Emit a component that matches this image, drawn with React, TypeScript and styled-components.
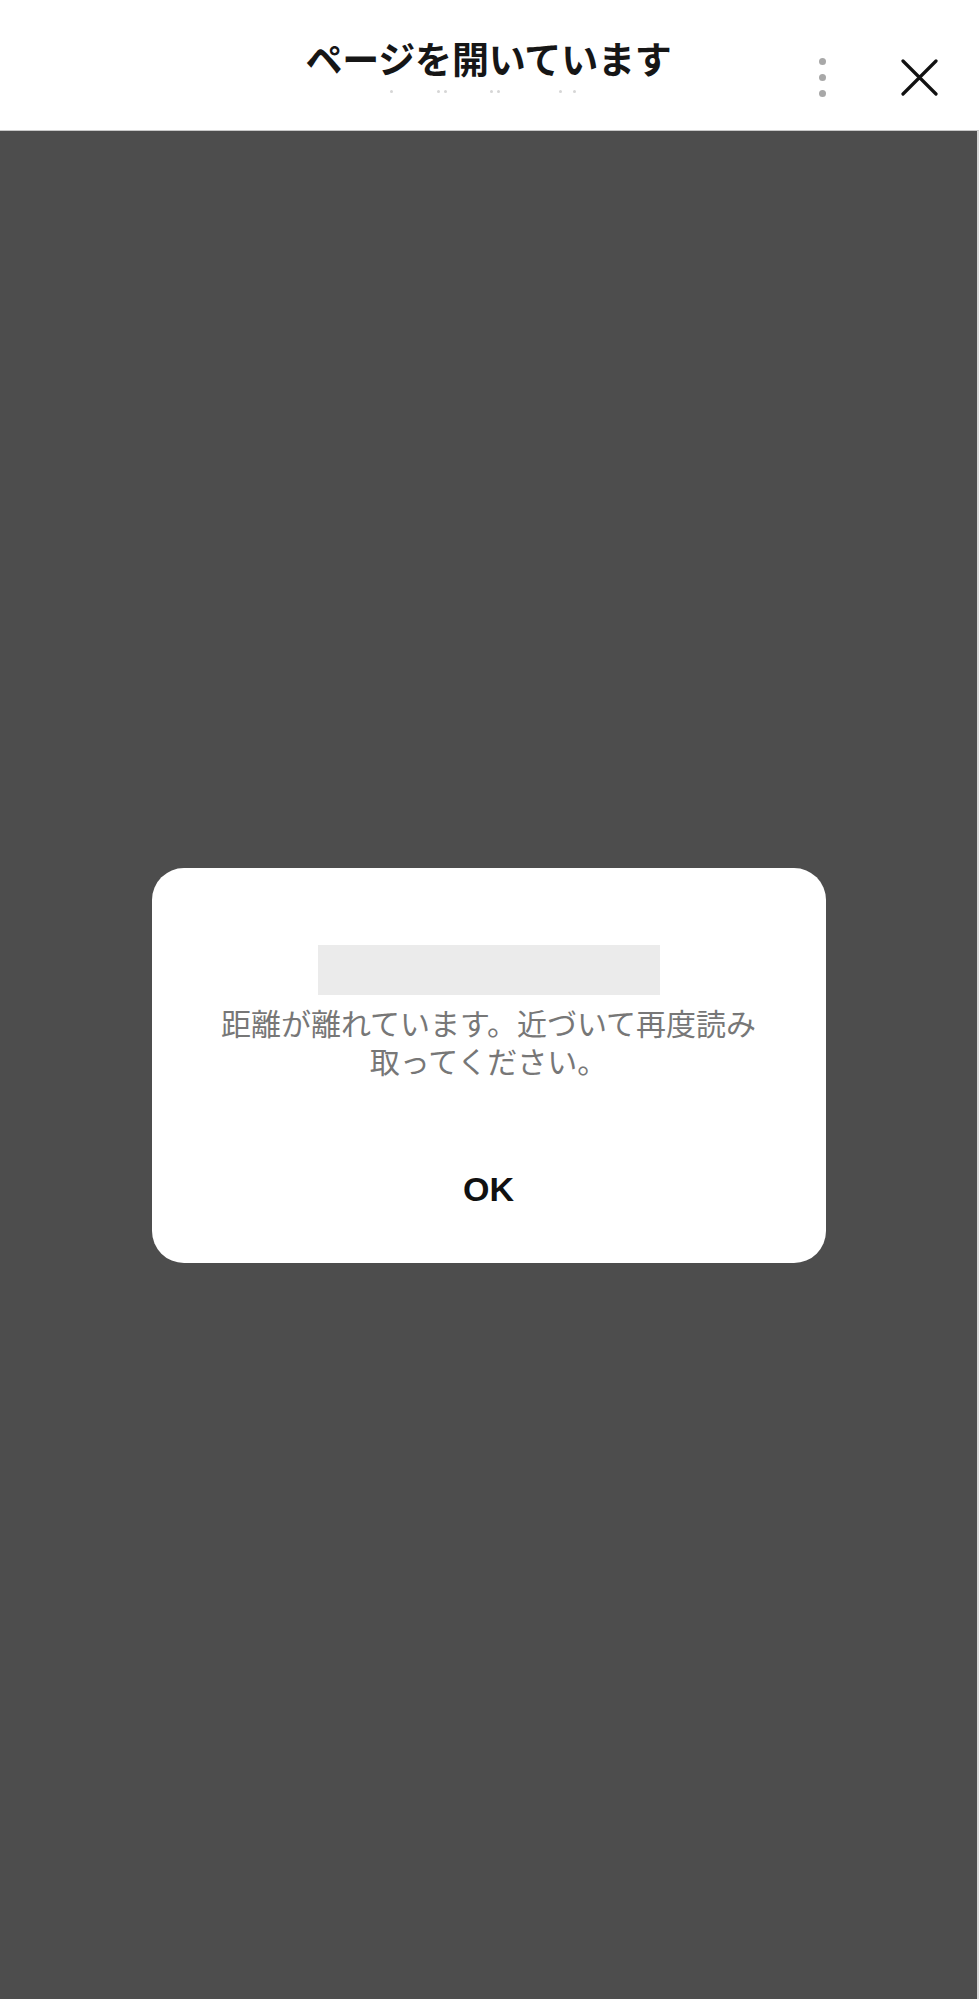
import React from "react";
import styled, { createGlobalStyle } from "styled-components";

const GlobalStyle = createGlobalStyle`
  html, body {
    margin: 0;
    padding: 0;
    background: #4d4d4d;
  }
  body {
    font-family: "Noto Sans CJK JP", "Noto Sans", sans-serif;
  }
`;

// 上のバーに並ぶ薄い点（URL の代わり）
const urlDots = [0, 47, 54, 100, 107, 169, 183];

const App = () => {
  return (
    <>
      <GlobalStyle />
      <SPage>
        <SHeader>
          <STitleBox>
            <STitle>ページを開いています</STitle>
            <SUrl>
              {urlDots.map((x, idx) => (
                <SUrlDot key={idx} style={{ left: x }} />
              ))}
            </SUrl>
          </STitleBox>
          <SActions>
            <SMenu aria-label="menu">
              <SMenuDot />
              <SMenuDot />
              <SMenuDot />
            </SMenu>
            <SClose aria-label="close">
              <svg width="37" height="37" viewBox="0 0 37 37">
                <path
                  d="M2 2 L35 35 M35 2 L2 35"
                  stroke="#111"
                  strokeWidth="3.2"
                  strokeLinecap="round"
                  fill="none"
                />
              </svg>
            </SClose>
          </SActions>
        </SHeader>
        <SOverlay>
          <SDialog>
            <SPlaceholder />
            <SMessage>距離が離れています。近づいて再度読み取ってください。</SMessage>
            <SOkButton>OK</SOkButton>
          </SDialog>
        </SOverlay>
      </SPage>
    </>
  );
};

export default App;

const SPage = styled.div`
  display: flex;
  flex-direction: column;
  width: 979px;
  height: 1999px;
`;

const SHeader = styled.header`
  position: relative;
  flex: 0 0 130px;
  display: flex;
  align-items: flex-start;
  justify-content: center;
  background: #ffffff;
  border-bottom: 1px solid #c8c8c8;
`;

const STitleBox = styled.div`
  display: flex;
  flex-direction: column;
  align-items: center;
  margin-top: 35px;
  margin-right: 2px;
`;

const STitle = styled.h1`
  margin: 0;
  font-size: 37px;
  line-height: 46px;
  font-weight: 700;
  color: #161616;
  letter-spacing: -0.2px;
`;

const SUrl = styled.div`
  position: relative;
  width: 190px;
  height: 4px;
  margin-top: 9px;
  margin-left: -8px;
`;

const SUrlDot = styled.span`
  position: absolute;
  top: 0;
  width: 3px;
  height: 3px;
  border-radius: 50%;
  background: #d6d6d6;
`;

const SActions = styled.div`
  position: absolute;
  top: 58px;
  right: 41px;
  display: flex;
  align-items: center;
  gap: 75px;
`;

const SMenu = styled.div`
  display: flex;
  flex-direction: column;
  align-items: center;
  gap: 9px;
`;

const SMenuDot = styled.span`
  width: 7px;
  height: 7px;
  border-radius: 50%;
  background: #a8a8a8;
`;

const SClose = styled.div`
  display: flex;
  width: 37px;
  height: 37px;
`;

const SOverlay = styled.main`
  flex: 1;
  display: flex;
  align-items: center;
  justify-content: center;
  background: #4d4d4d;
  border-right: 2px solid #d9d9d9;
`;

const SDialog = styled.div`
  box-sizing: border-box;
  width: 674px;
  padding: 77px 60px 53px;
  display: flex;
  flex-direction: column;
  align-items: center;
  background: #ffffff;
  border-radius: 32px;
`;

const SPlaceholder = styled.div`
  width: 342px;
  height: 50px;
  background: #ebebeb;
`;

const SMessage = styled.p`
  margin: 8px 0 0;
  font-size: 30px;
  line-height: 38px;
  color: #777777;
  text-align: center;
`;

const SOkButton = styled.button`
  margin-top: 91px;
  height: 40px;
  padding: 0 10px;
  border: none;
  background: transparent;
  font-family: "Liberation Sans", Arial, sans-serif;
  font-size: 34px;
  font-weight: 700;
  color: #111111;
  cursor: pointer;
`;
